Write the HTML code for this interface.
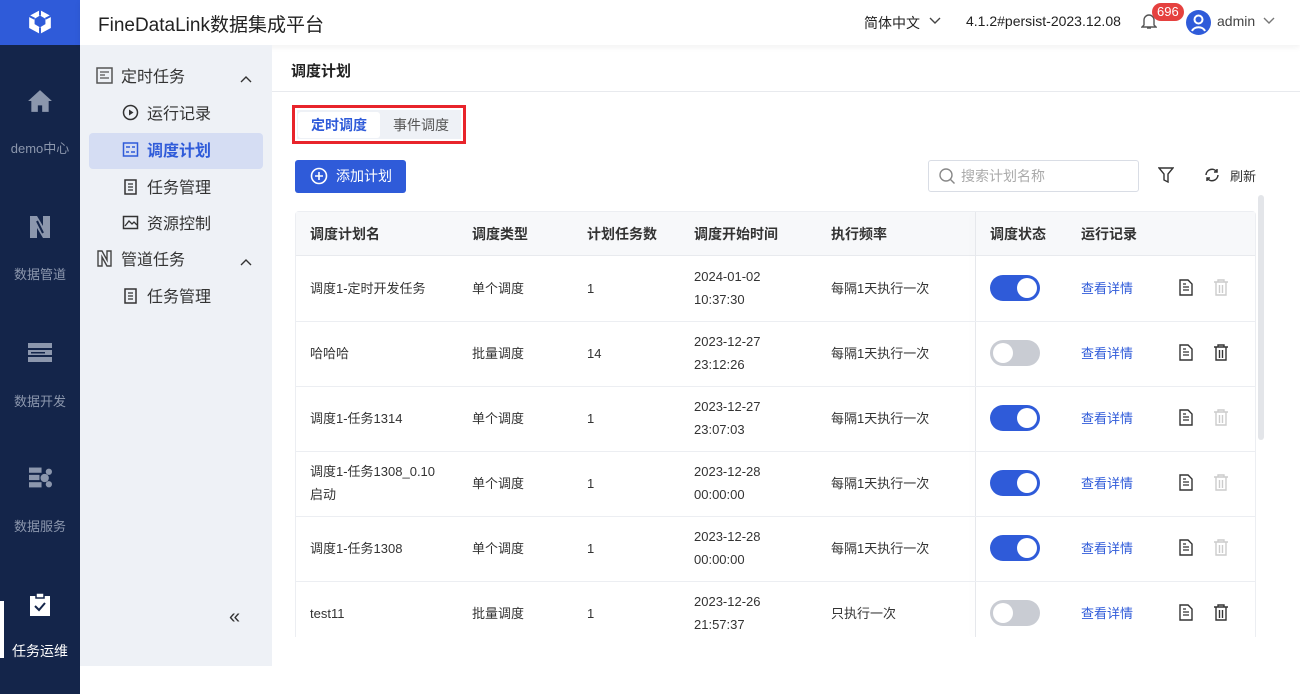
<!DOCTYPE html>
<html><head><meta charset="utf-8"><style>
*{box-sizing:border-box;margin:0;padding:0}
html,body{width:1300px;height:694px;overflow:hidden}
body{font-family:"Liberation Sans","Noto Sans CJK SC",sans-serif;background:#fff;position:relative;color:#333}
.abs{position:absolute}
#nav{left:0;top:0;width:80px;height:694px;background:#14254a}
#logo{left:0;top:0;width:80px;height:45px;background:#2f5bd9}
.navi{position:absolute;left:0;width:80px;text-align:center;color:#8c97ad;font-size:13px}
#hdr{left:80px;top:0;width:1220px;height:45px;background:#fff;box-shadow:0 2px 6px rgba(0,0,0,.06)}
#side{left:80px;top:45px;width:192px;height:621px;background:#eef1f6}
.si{position:absolute;font-size:16px;color:#333;display:flex;align-items:center}
.si svg{margin-right:8px}
.th{position:absolute;top:224px;font-size:14px;font-weight:bold;color:#333}
.cell{position:absolute;font-size:13px;color:#333;line-height:23px}
.tog{position:absolute;width:50px;height:26px;border-radius:13px}
.tog i{position:absolute;top:3px;width:20px;height:20px;border-radius:50%;background:#fff}
.link{position:absolute;font-size:13px;color:#2f5bd9}
</style></head><body>
<div id="nav" class="abs"></div>
<div id="logo" class="abs"><svg style="position:absolute;left:27px;top:9px" width="26" height="26" viewBox="0 0 24 24"><path d="M12 1 L22 6.5 V17.5 L12 23 L2 17.5 V6.5Z" fill="#fff"/><path d="M12 6 L17 9 V14 L12 17 L7 14 V9Z" fill="#2f5bd9"/><path d="M12 1V6M2 6.5L7 9M22 6.5L17 9M12 17V23" stroke="#2f5bd9" stroke-width="1.8"/></svg></div>
<svg class="abs" style="left:27px;top:89px" width="26" height="24" viewBox="0 0 24 22"><path d="M12 1L1 11h3v10h6v-6h4v6h6V11h3z" fill="#8c97ad"/></svg>
<div class="navi" style="top:138px">demo中心</div>
<svg class="abs" style="left:29px;top:214px" width="22" height="26" viewBox="0 0 22 24"><path d="M1 1h7l6 10V1h7v22h-7l-6-10v10H1z" fill="#8c97ad"/><path d="M8 6l6 12" stroke="#14254a" stroke-width="2"/></svg>
<div class="navi" style="top:264px">数据管道</div>
<svg class="abs" style="left:28px;top:342px" width="24" height="22" viewBox="0 0 24 20"><rect x="0" y="0" width="24" height="5" fill="#8c97ad"/><rect x="0" y="7" width="24" height="5" fill="#8c97ad"/><rect x="0" y="14" width="24" height="5" fill="#8c97ad"/><rect x="3" y="9" width="14" height="1.5" fill="#14254a"/></svg>
<div class="navi" style="top:391px">数据开发</div>
<svg class="abs" style="left:29px;top:467px" width="23" height="22" viewBox="0 0 22 20"><rect x="0" y="0" width="12" height="5" fill="#8c97ad"/><rect x="0" y="7" width="10" height="5" fill="#8c97ad"/><rect x="0" y="14" width="12" height="5" fill="#8c97ad"/><circle cx="15" cy="10" r="4" fill="#8c97ad"/><circle cx="19" cy="4" r="3" fill="#8c97ad"/><circle cx="19" cy="16" r="3" fill="#8c97ad"/></svg>
<div class="navi" style="top:516px">数据服务</div>
<div class="abs" style="left:0;top:601px;width:4px;height:57px;background:#fff"></div>
<svg class="abs" style="left:29px;top:593px" width="22" height="24" viewBox="0 0 22 24"><rect x="1" y="3" width="20" height="20" fill="#fff"/><rect x="7" y="0" width="8" height="5" fill="#fff" stroke="#14254a" stroke-width="1.5"/><path d="M6 13l4 4 6-7" stroke="#14254a" stroke-width="2" fill="none"/></svg>
<div class="navi" style="top:641px;color:#fff;font-size:14px">任务运维</div>

<div id="hdr" class="abs">
<div class="abs" style="left:18px;top:10px;font-size:19px;color:#222">FineDataLink数据集成平台</div>
<div class="abs" style="left:784px;top:13px;font-size:14px;color:#222">简体中文</div>
<svg class="abs" style="left:849px;top:17px" width="12" height="8" viewBox="0 0 12 8"><path d="M1 1l5 5 5-5" stroke="#444" stroke-width="1.4" fill="none"/></svg>
<div class="abs" style="left:886px;top:13px;font-size:14px;color:#222">4.1.2#persist-2023.12.08</div>
<svg class="abs" style="left:1061px;top:12px" width="16" height="18" viewBox="0 0 16 18"><path d="M3 13V8a5 5 0 0110 0v5l2 2H1z M6 16h4" stroke="#555" stroke-width="1.4" fill="none"/></svg>
<div class="abs" style="left:1072px;top:3px;background:#e5413f;color:#fff;font-size:13px;border-radius:9px;padding:0 5px;height:18px;line-height:18px">696</div>
<svg class="abs" style="left:1106px;top:10px" width="25" height="25" viewBox="0 0 25 25"><circle cx="12.5" cy="12.5" r="12.5" fill="#2f5bd9"/><circle cx="12.5" cy="9.5" r="4" stroke="#fff" stroke-width="2" fill="none"/><path d="M6 21a7 6 0 0113 0" stroke="#fff" stroke-width="2" fill="none"/></svg>
<div class="abs" style="left:1137px;top:13px;font-size:14px;color:#444">admin</div>
<svg class="abs" style="left:1183px;top:17px" width="12" height="8" viewBox="0 0 12 8"><path d="M1 1l5 5 5-5" stroke="#777" stroke-width="1.4" fill="none"/></svg>
</div>

<div id="side" class="abs"></div>
<div class="si" style="left:96px;top:63px"><svg width="17" height="17" viewBox="0 0 17 17"><rect x="1" y="1" width="15" height="15" fill="none" stroke="#555" stroke-width="1.5"/><path d="M4 5h9M4 8h5M4 11h9" stroke="#555" stroke-width="1.3"/></svg>定时任务</div>
<svg class="abs" style="left:240px;top:75px" width="12" height="8" viewBox="0 0 12 8"><path d="M1 7l5-5 5 5" stroke="#333" stroke-width="1.4" fill="none"/></svg>
<div class="si" style="left:122px;top:100px"><svg width="17" height="17" viewBox="0 0 17 17"><circle cx="8.5" cy="8.5" r="7" fill="none" stroke="#333" stroke-width="1.5"/><path d="M7 5.5v6l4.5-3z" fill="#333"/></svg>运行记录</div>
<div class="abs" style="left:89px;top:133px;width:174px;height:36px;background:#d5ddf3;border-radius:4px"></div>
<div class="si" style="left:122px;top:137px;color:#2f5bd9;font-weight:bold"><svg width="17" height="17" viewBox="0 0 17 17"><rect x="1.5" y="2" width="14" height="13" fill="none" stroke="#2f5bd9" stroke-width="1.5"/><path d="M4 6h4M10 6h3M4 11h3M9 11h4" stroke="#2f5bd9" stroke-width="1.5"/></svg>调度计划</div>
<div class="si" style="left:122px;top:174px"><svg width="17" height="17" viewBox="0 0 17 17"><rect x="3" y="2" width="11" height="14" fill="none" stroke="#333" stroke-width="1.5"/><path d="M6 6h5M6 9h5M6 12h5" stroke="#333" stroke-width="1.3"/></svg>任务管理</div>
<div class="si" style="left:122px;top:210px"><svg width="17" height="17" viewBox="0 0 17 17"><rect x="1.5" y="2.5" width="14" height="12" fill="none" stroke="#333" stroke-width="1.5"/><path d="M3 12l4-5 3 3 2-2 3 3" stroke="#333" stroke-width="1.3" fill="none"/></svg>资源控制</div>
<div class="si" style="left:96px;top:246px"><svg width="17" height="17" viewBox="0 0 17 17"><path d="M2 1h4l5 9V1h4v15h-4l-5-9v9H2z" fill="none" stroke="#444" stroke-width="1.4"/></svg>管道任务</div>
<svg class="abs" style="left:240px;top:258px" width="12" height="8" viewBox="0 0 12 8"><path d="M1 7l5-5 5 5" stroke="#333" stroke-width="1.4" fill="none"/></svg>
<div class="si" style="left:122px;top:283px"><svg width="17" height="17" viewBox="0 0 17 17"><rect x="3" y="2" width="11" height="14" fill="none" stroke="#333" stroke-width="1.5"/><path d="M6 6h5M6 9h5M6 12h5" stroke="#333" stroke-width="1.3"/></svg>任务管理</div>
<div class="abs" style="left:229px;top:606px;font-size:20px;color:#333">«</div>

<div class="abs" style="left:291px;top:60px;font-size:15px;font-weight:bold;color:#222">调度计划</div>
<div class="abs" style="left:272px;top:91px;width:1028px;height:1px;background:#e8eaee"></div>
<div class="abs" style="left:292px;top:105px;width:174px;height:39px;border:3px solid #e8242b"></div>
<div class="abs" style="left:297px;top:110px;width:164px;height:29px;background:#eef1f6"></div>
<div class="abs" style="left:298px;top:112px;width:82px;height:26px;background:#fff;border-radius:3px;color:#2f5bd9;font-weight:bold;font-size:14px;text-align:center;line-height:26px">定时调度</div>
<div class="abs" style="left:382px;top:112px;width:78px;height:26px;color:#555;font-size:14px;text-align:center;line-height:26px">事件调度</div>
<div class="abs" style="left:295px;top:160px;width:111px;height:33px;background:#2f5bd9;border-radius:3px;color:#fff;font-size:14px;line-height:33px;padding-left:41px">添加计划</div>
<svg class="abs" style="left:310px;top:167px" width="18" height="18" viewBox="0 0 18 18"><circle cx="9" cy="9" r="7.5" stroke="#fff" stroke-width="1.6" fill="none"/><path d="M9 5v8M5 9h8" stroke="#fff" stroke-width="1.6"/></svg>
<div class="abs" style="left:928px;top:160px;width:211px;height:32px;border:1px solid #d9dde5;border-radius:3px;font-size:14px;color:#aaa;line-height:30px;padding-left:32px">搜索计划名称</div>
<svg class="abs" style="left:939px;top:168px" width="17" height="17" viewBox="0 0 17 17"><circle cx="7" cy="7" r="6" stroke="#888" stroke-width="1.4" fill="none"/><path d="M11.5 11.5l4 4" stroke="#888" stroke-width="1.4"/></svg>
<svg class="abs" style="left:1158px;top:167px" width="16" height="16" viewBox="0 0 16 16"><path d="M1 1h14l-5 6v8l-4-2V7z" stroke="#333" stroke-width="1.4" fill="none"/></svg>
<svg class="abs" style="left:1204px;top:167px" width="16" height="16" viewBox="0 0 16 16"><path d="M14 8a6 6 0 01-11 3M2 8a6 6 0 0111-3" stroke="#333" stroke-width="1.5" fill="none"/><path d="M13 2v3h-3M3 14v-3h3" stroke="#333" stroke-width="1.5" fill="none"/></svg>
<div class="abs" style="left:1230px;top:166px;font-size:13px;color:#333">刷新</div>

<div class="abs" style="left:295px;top:211px;width:961px;height:426px;border:1px solid #eceef2;border-bottom:none;border-radius:4px 4px 0 0"></div>
<div class="abs" style="left:296px;top:212px;width:959px;height:44px;background:#f7f8fa;border-bottom:1px solid #e8eaee"></div>
<div class="abs" style="left:975px;top:212px;width:1px;height:425px;background:#e6e8ec;box-shadow:-3px 0 6px rgba(0,0,0,.05)"></div>
<div class="abs" style="left:1258px;top:195px;width:6px;height:245px;background:#e3e5e9;border-radius:3px"></div>
<div class="th" style="left:310px">调度计划名</div>
<div class="th" style="left:472px">调度类型</div>
<div class="th" style="left:587px">计划任务数</div>
<div class="th" style="left:694px">调度开始时间</div>
<div class="th" style="left:831px">执行频率</div>
<div class="th" style="left:990px">调度状态</div>
<div class="th" style="left:1081px">运行记录</div>

<div id="rows"></div>
<script>
var d=[["调度1-定时开发任务","单个调度","1","2024-01-02","10:37:30","每隔1天执行一次",1,0],
["哈哈哈","批量调度","14","2023-12-27","23:12:26","每隔1天执行一次",0,1],
["调度1-任务1314","单个调度","1","2023-12-27","23:07:03","每隔1天执行一次",1,0],
["调度1-任务1308_0.10<br>启动","单个调度","1","2023-12-28","00:00:00","每隔1天执行一次",1,0],
["调度1-任务1308","单个调度","1","2023-12-28","00:00:00","每隔1天执行一次",1,0],
["test11","批量调度","1","2023-12-26","21:57:37","只执行一次",0,1]];
var h="";
d.forEach(function(r,i){var t=256+i*65,c=t+32;
var multi=r[0].indexOf("<br>")>0;
h+='<div class="cell" style="left:310px;top:'+(multi?c-23:c-11)+'px">'+r[0]+'</div>';
h+='<div class="cell" style="left:472px;top:'+(c-11)+'px">'+r[1]+'</div>';
h+='<div class="cell" style="left:587px;top:'+(c-11)+'px">'+r[2]+'</div>';
h+='<div class="cell" style="left:694px;top:'+(c-23)+'px">'+r[3]+'<br>'+r[4]+'</div>';
h+='<div class="cell" style="left:831px;top:'+(c-11)+'px">'+r[5]+'</div>';
h+='<div class="tog" style="left:990px;top:'+(c-13)+'px;background:'+(r[6]?'#2f5bd9':'#c9ccd3')+'"><i style="left:'+(r[6]?27:3)+'px"></i></div>';
h+='<div class="link" style="left:1081px;top:'+(c-10)+'px">查看详情</div>';
h+='<svg class="abs" style="left:1179px;top:'+(c-9)+'px" width="14" height="17" viewBox="0 0 14 17"><path d="M1 1h8l4 4v11H1z" stroke="#333" stroke-width="1.4" fill="none"/><path d="M4 8h6M4 11h6M4 5h3" stroke="#333" stroke-width="1.3"/></svg>';
var tc=r[7]?'#333':'#ccc';
h+='<svg class="abs" style="left:1213px;top:'+(c-9)+'px" width="16" height="17" viewBox="0 0 16 17"><path d="M1 3h14M5 3V1h6v2M3 3v13h10V3M6.5 6v8M9.5 6v8" stroke="'+tc+'" stroke-width="1.4" fill="none"/></svg>';
if(i<5)h+='<div class="abs" style="left:296px;top:'+(t+65)+'px;width:959px;height:1px;background:#eceef2"></div>';
});
document.getElementById("rows").innerHTML=h;
</script>
</body></html>
